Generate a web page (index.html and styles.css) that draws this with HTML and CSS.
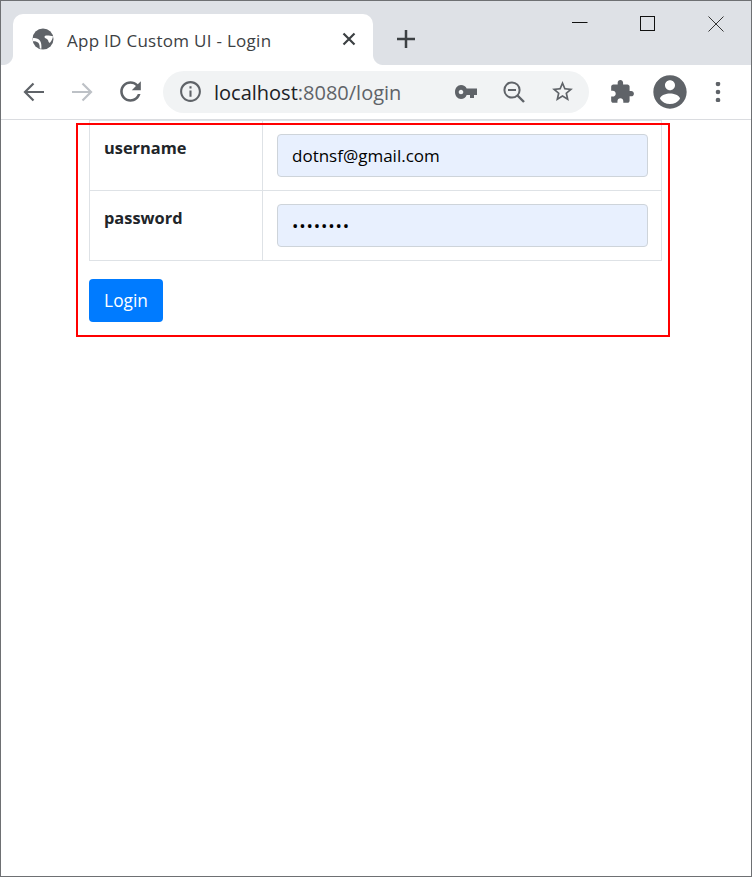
FILE: index.html
```html
<!DOCTYPE html>
<html lang="en">
<head>
<meta charset="utf-8">
<title>App ID Custom UI - Login</title>
<link rel="stylesheet" href="styles.css">
</head>
<body>
<div class="window">
  <header class="tabstrip">
    <div class="tab">
      <svg class="favicon" viewBox="0 0 22 22" width="22" height="22"><circle cx="11" cy="11" r="10.5" fill="#5f6368"/><path d="M.8 10.200C4 9.800 6.600 11 8 12.800c1.200 1.600 1.600 4.400 1.400 8l-1.700-.3c.2-2.600-.4-4.500-1.400-5.700C5.400 13.600 3.200 13 .7 13.200zM21 8.200c-2.400-.4-6.200-1.200-7.800-.4-1.400.8-.6 2.200.8 2.800 1.400.6 2.200 1.400 2.600 3.400l1.200.9c1.600-1.800 2.800-4 3.200-6.700z" fill="#fff"/></svg>
      <span class="tab-title">App ID Custom UI - Login</span>
      <svg class="tab-close" viewBox="0 0 14 14" width="14" height="14"><path d="M1.500 1.500l11 11M12.500 1.500l-11 11" stroke="#3c4043" stroke-width="2.200" fill="none"/></svg>
    </div>
    <svg class="newtab" viewBox="0 0 18 18" width="18" height="18"><path d="M9 0v18M0 9h18" stroke="#3c4043" stroke-width="2.500" fill="none"/></svg>
    <div class="winctl">
      <div class="winbtn"><svg viewBox="0 0 16 16" width="16" height="16"><path d="M0 6.500h15.500" stroke="#111" stroke-width="1" fill="none"/></svg></div>
      <div class="winbtn"><svg viewBox="0 0 16 16" width="16" height="16"><rect x=".5" y=".5" width="14" height="14" stroke="#111" stroke-width="1" fill="none"/></svg></div>
      <div class="winbtn"><svg viewBox="0 0 16 16" width="16" height="16"><path d="M.5 .5l15 15M15.500 .5l-15 15" stroke="#333" stroke-width="1" fill="none"/></svg></div>
    </div>
  </header>

  <nav class="toolbar">
    <div class="navbtns">
      <button class="iconbtn"><svg viewBox="0 0 24 24" width="24" height="24"><path d="M22 12H3.500M11.500 3.500L3 12l8.500 8.500" stroke="#5f6368" stroke-width="2.200" fill="none"/></svg></button>
      <button class="iconbtn"><svg viewBox="0 0 24 24" width="24" height="24"><path d="M2 12h18.500M12.500 3.500L21 12l-8.500 8.500" stroke="#bdc1c6" stroke-width="2.200" fill="none"/></svg></button>
      <button class="iconbtn"><svg viewBox="0 0 24 24" width="31" height="31"><path d="M17.650 6.350C16.200 4.900 14.210 4 12 4c-4.420 0-7.990 3.580-7.990 8s3.570 8 7.990 8c3.730 0 6.840-2.550 7.730-6h-2.080c-.82 2.330-3.040 4-5.650 4-3.310 0-6-2.690-6-6s2.690-6 6-6c1.660 0 3.140.69 4.220 1.780L13 11h7V4l-2.350 2.350z" fill="#5f6368"/></svg></button>
    </div>
    <div class="omnibox">
      <svg class="info" viewBox="0 0 24 24" width="25" height="25"><path d="M11 7h2v2h-2zm0 4h2v6h-2zm1-9C6.480 2 2 6.480 2 12s4.480 10 10 10 10-4.480 10-10S17.520 2 12 2zm0 18c-4.410 0-8-3.590-8-8s3.590-8 8-8 8 3.590 8 8-3.590 8-8 8z" fill="#5f6368"/></svg>
      <span class="url"><span class="host">localhost</span>:8080/login</span>
      <div class="omni-actions">
        <svg viewBox="0 0 24 24" width="24" height="24"><path d="M12.650 8.500C11.830 6.300 9.610 5 7 5c-3.310 0-6 3.100-6 7s2.690 7 6 7c2.610 0 4.830-1.300 5.650-4H16v3h4v-3h3V8.500zM7 14.300c-1.300 0-2.300-1-2.300-2.300S5.700 9.700 7 9.700 9.300 10.700 9.300 12 8.300 14.300 7 14.300z" fill="#5f6368"/></svg>
        <svg viewBox="0 0 24 24" width="24" height="24"><circle cx="10" cy="10" r="7.600" stroke="#5f6368" stroke-width="2" fill="none"/><path d="M6 10h8" stroke="#5f6368" stroke-width="2" fill="none"/><path d="M15.500 15.500L22 22" stroke="#5f6368" stroke-width="2.400" fill="none"/></svg>
        <svg viewBox="0 0 24 24" width="25" height="25"><path d="M22 9.240l-7.190-.62L12 2 9.190 8.630 2 9.240l5.460 4.730L5.820 21 12 17.270 18.180 21l-1.630-7.030L22 9.240zM12 15.400l-3.760 2.270 1-4.280-3.320-2.880 4.380-.38L12 6.100l1.710 4.040 4.380.38-3.320 2.880 1 4.280L12 15.400z" fill="#5f6368"/></svg>
      </div>
    </div>
    <div class="extbtns">
      <button class="iconbtn"><svg viewBox="0 0 24 24" width="26" height="26"><path d="M20.500 11H19V7c0-1.100-.9-2-2-2h-4V3.500C13 2.120 11.880 1 10.500 1S8 2.120 8 3.500V5H4c-1.100 0-1.990.9-1.990 2v3.800H3.500c1.490 0 2.700 1.210 2.700 2.700s-1.210 2.700-2.700 2.700H2V20c0 1.100.9 2 2 2h3.800v-1.500c0-1.490 1.210-2.700 2.700-2.700 1.490 0 2.700 1.210 2.700 2.700V22H17c1.100 0 2-.9 2-2v-4h1.500c1.380 0 2.500-1.120 2.500-2.500S21.880 11 20.500 11z" fill="#5f6368"/></svg></button>
      <button class="iconbtn"><svg viewBox="0 0 24 24" width="40" height="40"><path d="M12 2C6.480 2 2 6.480 2 12s4.480 10 10 10 10-4.480 10-10S17.520 2 12 2zm0 3c1.660 0 3 1.340 3 3s-1.340 3-3 3-3-1.340-3-3 1.340-3 3-3zm0 14.200c-2.500 0-4.710-1.280-6-3.220.03-1.990 4-3.080 6-3.080 1.990 0 5.970 1.090 6 3.080-1.290 1.940-3.500 3.220-6 3.220z" fill="#5f6368"/></svg></button>
      <button class="iconbtn"><svg viewBox="0 0 6 20" width="6" height="20"><circle cx="3" cy="2" r="2.300" fill="#5f6368"/><circle cx="3" cy="10" r="2.300" fill="#5f6368"/><circle cx="3" cy="18" r="2.300" fill="#5f6368"/></svg></button>
    </div>
  </nav>

  <main class="page">
    <form class="login">
      <table class="fields">
        <tr>
          <th class="label">username</th>
          <td class="value"><input class="field" type="text" name="username" value="dotnsf@gmail.com"></td>
        </tr>
        <tr>
          <th class="label">password</th>
          <td class="value"><input class="field secret" type="password" name="password" value="password"></td>
        </tr>
      </table>
      <button class="submit" type="button">Login</button>
    </form>
    <div class="highlight"></div>
  </main>
</div>
</body>
</html>
```

FILE: styles.css
```css
* { box-sizing: border-box; }
html, body { margin: 0; padding: 0; background: #fff; }
body { font-family: "Open Sans", "Noto Sans", sans-serif; }

.window {
  width: 752px;
  height: 877px;
  border: 1px solid #6e7073;
  display: flex;
  flex-direction: column;
  overflow: hidden;
  background: #fff;
}

/* tab strip */
.tabstrip {
  height: 64px;
  flex: none;
  display: flex;
  align-items: flex-end;
  background: #dee1e6;
  padding-left: 12px;
}
.tab {
  position: relative;
  width: 360px;
  height: 51px;
  flex: none;
  display: flex;
  align-items: center;
  padding: 0 17px 1px 19px;
  background: #fff;
  border-radius: 10px 10px 0 0;
}
.tab::before,
.tab::after {
  content: "";
  position: absolute;
  bottom: 0;
  width: 10px;
  height: 10px;
}
.tab::before { left: -10px; background: radial-gradient(circle at 0 0, #dee1e6 9.5px, #fff 10.5px); }
.tab::after { right: -10px; background: radial-gradient(circle at 100% 0, #dee1e6 9.5px, #fff 10.5px); }
.favicon { flex: none; }
.tab-title {
  flex: 1;
  margin-left: 13px;
  padding-top: 2px;
  font-size: 17px;
  letter-spacing: .28px;
  color: #3c4043;
  white-space: nowrap;
}
.tab-close { flex: none; }
.newtab { flex: none; margin: 0 0 17px 24px; }
.winctl {
  display: flex;
  margin-left: auto;
  align-self: flex-start;
  padding-right: 1px;
}
.winbtn {
  width: 68px;
  height: 46px;
  padding-top: 15px;
  display: flex;
  justify-content: center;
}

/* toolbar */
.toolbar {
  height: 55px;
  flex: none;
  display: flex;
  align-items: center;
  padding: 0 0 1px 9px;
  border-bottom: 1px solid #dadce0;
  background: #fff;
}
.iconbtn {
  width: 48px;
  height: 42px;
  flex: none;
  padding: 0;
  border: 0;
  background: none;
  display: flex;
  align-items: center;
  justify-content: center;
}
.navbtns, .extbtns { display: flex; flex: none; }
.navbtns { width: 153px; }
.extbtns { margin-left: 9px; }
.omnibox {
  width: 426px;
  height: 42px;
  flex: none;
  display: flex;
  align-items: center;
  padding-left: 15px;
  border-radius: 21px;
  background: #f1f3f4;
}
.info { flex: none; }
.url {
  flex: 1;
  margin-left: 11px;
  padding-top: 1px;
  font-size: 20px;
  color: #5f6368;
  white-space: nowrap;
}
.host { color: #202124; }
.omni-actions {
  display: flex;
  align-items: center;
  gap: 24px;
  padding-right: 14px;
}

/* page */
.page {
  position: relative;
  flex: 1;
  overflow: hidden;
  padding-left: 88px;
}
.login { width: 573px; }
.fields {
  width: 573px;
  table-layout: fixed;
  border-collapse: separate;
  border-spacing: 0;
  border-top: 1px solid #dee2e6;
  border-left: 1px solid #dee2e6;
}
.label {
  width: 173px;
  padding: 15px 14px 11px;
  border-right: 1px solid #dee2e6;
  border-bottom: 1px solid #dee2e6;
  text-align: left;
  vertical-align: top;
  font-size: 16.400px;
  line-height: 24px;
  font-weight: 700;
  color: #212529;
}
.value {
  padding: 13px 13px 13px 14px;
  border-right: 1px solid #dee2e6;
  border-bottom: 1px solid #dee2e6;
}
.field {
  display: block;
  width: 100%;
  height: 43px;
  padding: 0 14px;
  border: 1px solid #ced4da;
  border-radius: 4px;
  background: #e8f0fe;
  font-family: inherit;
  font-size: 17px;
  color: #000;
}
.secret { letter-spacing: .85px; }
.submit {
  display: block;
  width: 74px;
  height: 43px;
  margin-top: 18px;
  padding: 0;
  border: 0;
  border-radius: 4px;
  background: #007bff;
  color: #fff;
  font-family: inherit;
  font-size: 17.300px;
}
.highlight {
  position: absolute;
  left: 75px;
  top: 3px;
  width: 594px;
  height: 214px;
  border: 2px solid #f00;
  pointer-events: none;
}
```
